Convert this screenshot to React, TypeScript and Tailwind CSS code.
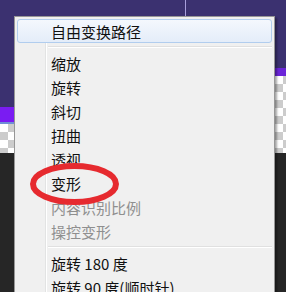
import React from "react";

const font = { fontFamily: '"Noto Sans CJK SC", "Noto Sans", sans-serif' };

function Row({ text, disabled }: { text: string; disabled?: boolean }) {
  return (
    <div className="flex h-6">
      <div className="w-[28px] shrink-0" />
      <div
        className={
          "flex flex-1 items-center border-l border-[#e2e3e3] pl-[5px] shadow-[inset_1px_0_0_#ffffff] text-[15px] leading-none " +
          (disabled ? "text-[#8f8f8f]" : "text-[#111111]")
        }
      >
        {text}
      </div>
    </div>
  );
}

function Sep() {
  return (
    <div className="flex h-2">
      <div className="w-[28px] shrink-0" />
      <div className="flex flex-1 items-center border-l border-[#e2e3e3] pl-[2px] shadow-[inset_1px_0_0_#ffffff]">
        <div className="h-[2px] flex-1 border-t border-[#e0e0e0] bg-white" />
      </div>
    </div>
  );
}

const checker =
  "bg-[repeating-conic-gradient(#cccccc_0_25%,#ffffff_0_50%)] bg-[length:16px_16px]";

export default function App() {
  return (
    <div className="relative h-[292px] w-[286px] overflow-hidden bg-[#262626]" style={font}>
      <div className="flex h-4 bg-[#3b3170]">
        <div className="w-[185px]" />
        <div className="w-px bg-[#a89fdc]" />
      </div>
      <div className="flex">
        <div className="flex w-[14px] shrink-0 flex-col">
          <div className="h-[91px] bg-[#3b3170]" />
          <div className="h-[15px] bg-[#7a1cf2]" />
          <div className="h-[2px] bg-[#6f8fd6]" />
          <div className={"h-[29px] " + checker} />
          <div className="h-[150px] bg-[#262626]" />
        </div>
        <div className="z-10 flex w-[261px] shrink-0 flex-col border border-b-0 border-[#979797] bg-[#f0f0f0] px-[2px] pt-[2px] shadow-[2px_2px_2px_rgba(0,0,0,0.35)]">
          <div className="flex h-6 items-center rounded-[3px] border border-[#b1cdee] bg-gradient-to-b from-[#f4f8fd] to-[#e4edf9] pl-[33px] text-[15px] leading-none text-[#111111]">
            自由变换路径
          </div>
          <Sep />
          <Row text="缩放" />
          <Row text="旋转" />
          <Row text="斜切" />
          <Row text="扭曲" />
          <Row text="透视" />
          <Row text="变形" />
          <Row text="内容识别比例" disabled />
          <Row text="操控变形" disabled />
          <Sep />
          <Row text="旋转 180 度" />
          <Row text="旋转 90 度(顺时针)" />
        </div>
        <div className="flex w-[11px] shrink-0 flex-col">
          <div className="h-[52px] bg-[#3b3170]" />
          <div className="h-[8px] bg-[#6a24d8]" />
          <div className={"h-[77px] " + checker} />
          <div className="h-[150px] bg-[#262626]" />
        </div>
      </div>
      <svg
        className="pointer-events-none absolute left-0 top-0 z-20"
        width="286"
        height="292"
        viewBox="0 0 286 292"
      >
        <ellipse cx="74.5" cy="184" rx="41.5" ry="18" fill="none" stroke="#e62a2f" strokeWidth="6" />
      </svg>
    </div>
  );
}
